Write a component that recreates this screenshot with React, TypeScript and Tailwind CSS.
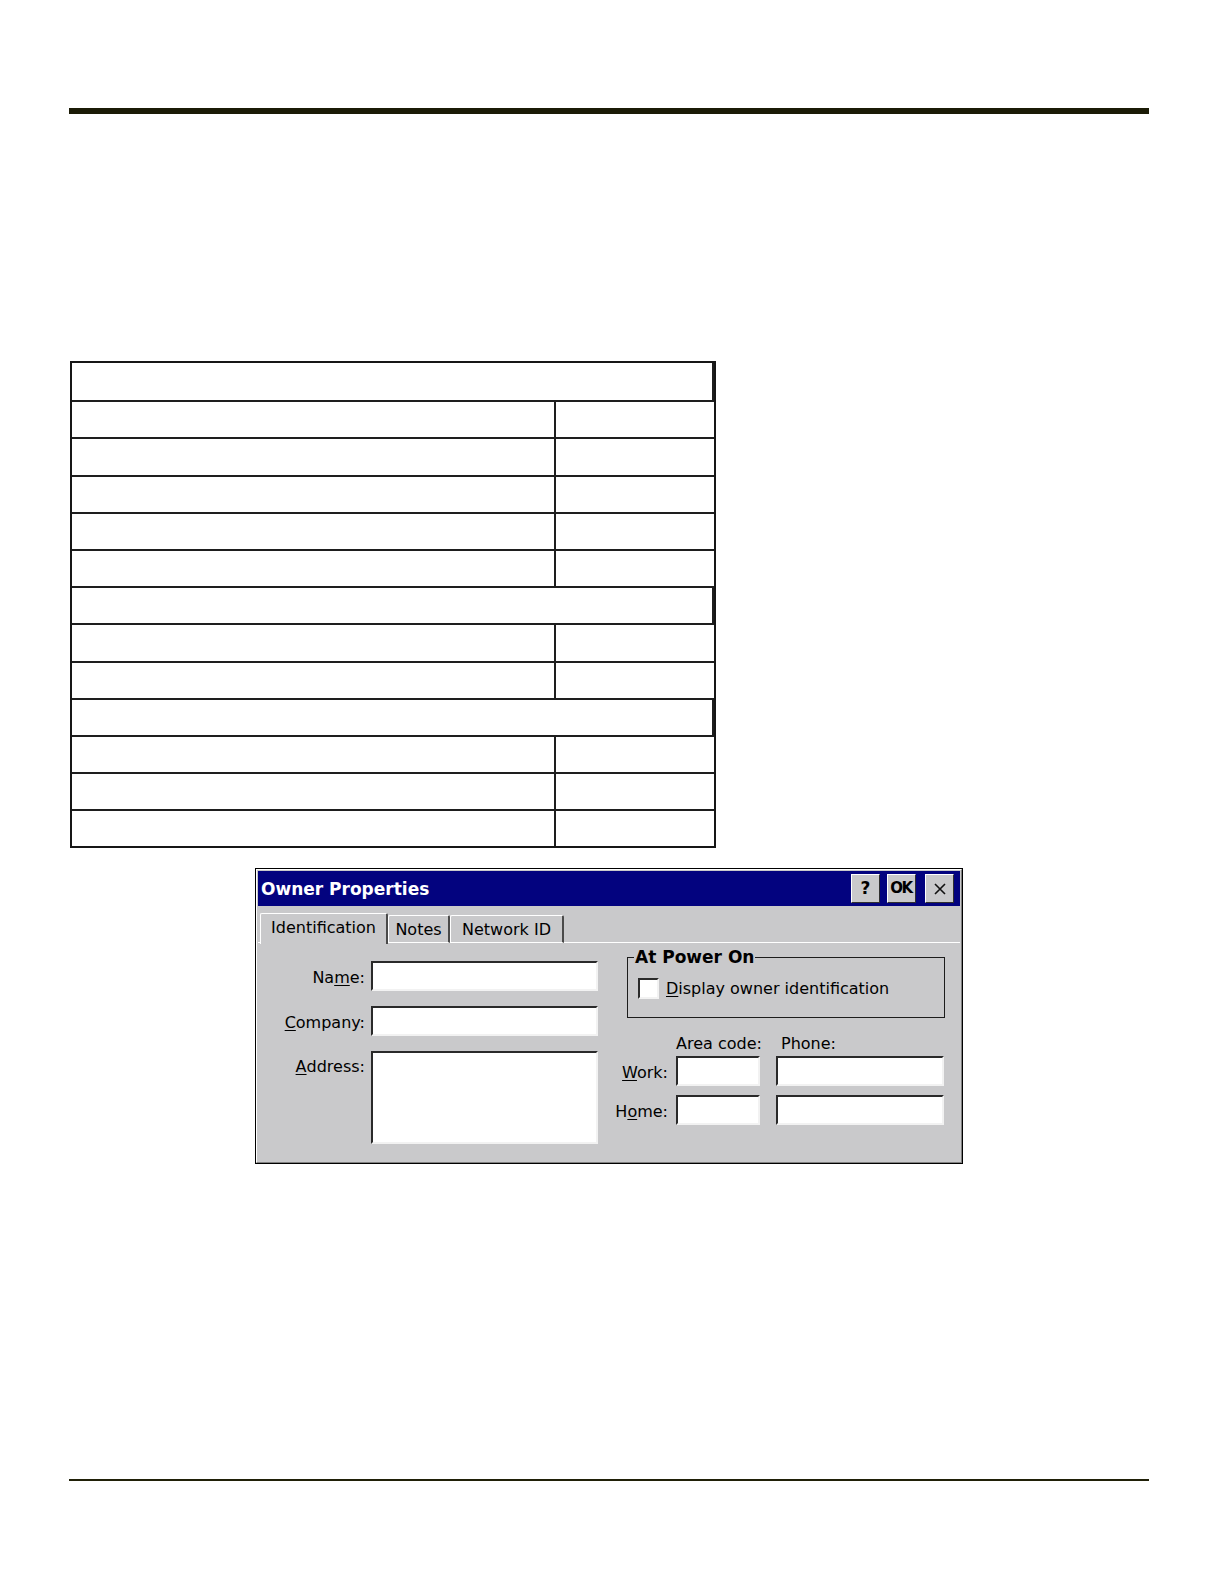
export default function App() {
  const rows: ("full" | "split")[] = [
    "full", "split", "split", "split", "split", "split",
    "full", "split", "split", "full", "split", "split", "split",
  ];
  const sunken =
    "border-2 border-t-[#2a2a2a] border-l-[#2a2a2a] border-b-[#f2f2f2] border-r-[#f2f2f2] bg-white";
  return (
    <div className="w-[1224px] h-[1584px] bg-white flex flex-col overflow-hidden font-['DejaVu_Sans',sans-serif] text-black">
      <div className="mt-[108px] ml-[69px] w-[1080px] h-[6px] bg-[#1b1b06]" />

      <div className="mt-[247px] ml-[70px] w-[646px] border-2 border-[#161616] flex flex-col">
        {rows.map((r, i) => (
          <div
            key={i}
            className={
              i > 0
                ? "h-[37.2px] flex border-t-2 border-[#1e1e1e]"
                : "h-[37.2px] flex"
            }
          >
            {r === "split" ? (
              <>
                <div className="w-[482px]" />
                <div className="flex-1 border-l-2 border-[#1e1e1e]" />
              </>
            ) : (
              <div className="flex-1 border-r-2 border-[#1e1e1e]" />
            )}
          </div>
        ))}
      </div>

      <div className="mt-[20px] ml-[255px] w-[708px] h-[296px] border border-black">
        <div className="w-full h-full border border-t-white border-l-white border-r-[#808080] border-b-[#808080] bg-[#c9c9cb] p-[1px] flex flex-col">
          <div className="h-[35px] bg-[#03037f] flex items-center pl-[3px] pr-[6px]">
            <span className="text-white font-bold text-[17px] leading-[20px]">
              Owner Properties
            </span>
            <div className="ml-auto flex items-center">
              <div className="w-[29px] h-[29px] bg-[#c9c9cb] border border-t-white border-l-white border-r-[#303030] border-b-[#303030] flex items-center justify-center font-bold text-[17px] leading-none">
                ?
              </div>
              <div className="ml-[7px] w-[29px] h-[29px] bg-[#c9c9cb] border border-t-white border-l-white border-r-[#303030] border-b-[#303030] flex items-center justify-center font-bold text-[15px] leading-none tracking-[-1.5px] pr-[1px]">
                OK
              </div>
              <div className="ml-[9px] w-[29px] h-[29px] bg-[#c9c9cb] border border-t-white border-l-white border-r-[#303030] border-b-[#303030] flex items-center justify-center">
                <svg width="14" height="14" viewBox="0 0 14 14">
                  <path d="M2 2 L12 12 M12 2 L2 12" stroke="#111" strokeWidth="1.6" />
                </svg>
              </div>
            </div>
          </div>

          <div className="h-[37px] flex items-end">
            <div className="w-[2px] h-full border-b border-white" />
            <div className="w-[128px] h-[31px] -mb-[1px] bg-[#c9c9cb] border-t border-l border-white border-r-2 border-r-[#4a4a4a] rounded-t-[2px] flex items-start justify-center pt-[4px] text-[16px] leading-[20px] relative z-10">
              Identification
            </div>
            <div className="w-[62px] h-[28px] border-t border-l border-b border-white border-r-2 border-r-[#4a4a4a] rounded-t-[2px] flex items-center justify-center text-[16px] leading-[20px] pt-[2px]">
              Notes
            </div>
            <div className="w-[114px] h-[28px] border-t border-l border-b border-white border-r-2 border-r-[#4a4a4a] rounded-t-[2px] flex items-center justify-center text-[16px] leading-[20px] pt-[2px]">
              Network ID
            </div>
            <div className="flex-1 h-full border-b border-white" />
          </div>

          <div className="flex items-start pt-[4px] text-[16px] leading-[20px]">
            <div className="mt-[14px] grid grid-cols-[107px_227px] gap-x-[6px] gap-y-[15px]">
              <div className="flex justify-end items-center pt-[3px]">
                Na<span className="underline underline-offset-2">m</span>e:
              </div>
              <div className={"h-[30px] " + sunken} />
              <div className="flex justify-end items-center pt-[3px]">
                <span className="underline underline-offset-2">C</span>ompany:
              </div>
              <div className={"h-[30px] " + sunken} />
              <div className="flex justify-end items-start pt-[6px]">
                <span className="underline underline-offset-2">A</span>ddress:
              </div>
              <div className={"h-[93px] " + sunken} />
            </div>

            <div className="ml-[29px] w-[318px] flex flex-col">
              <fieldset className="border border-[#1c1c1c] pt-[10px] pb-[18px]">
                <legend className="ml-[6px] px-[1px] font-bold text-[17px] leading-[20px]">
                  At Power On
                </legend>
                <div className="flex items-center">
                  <div className={"ml-[10px] w-[21px] h-[21px] " + sunken} />
                  <span className="ml-[7px] pt-[2px]">
                    <span className="underline underline-offset-2">D</span>isplay owner identification
                  </span>
                </div>
              </fieldset>

              <div className="mt-[16px] flex h-[20px] pl-[49px]">
                <span className="w-[105px] whitespace-nowrap">Area code:</span>
                <span>Phone:</span>
              </div>
              <div className="mt-[2px] flex items-center">
                <div className="w-[41px] flex justify-end whitespace-nowrap pt-[3px]">
                  <span>
                    <span className="underline underline-offset-2">W</span>ork:
                  </span>
                </div>
                <div className={"ml-[8px] w-[84px] h-[30px] " + sunken} />
                <div className={"ml-[16px] w-[168px] h-[30px] " + sunken} />
              </div>
              <div className="mt-[9px] flex items-center">
                <div className="w-[41px] flex justify-end whitespace-nowrap pt-[3px]">
                  <span>
                    H<span className="underline underline-offset-2">o</span>me:
                  </span>
                </div>
                <div className={"ml-[8px] w-[84px] h-[30px] " + sunken} />
                <div className={"ml-[16px] w-[168px] h-[30px] " + sunken} />
              </div>
            </div>
          </div>
        </div>
      </div>

      <div className="mt-[315px] ml-[69px] w-[1080px] h-[2px] bg-[#202008]" />
    </div>
  );
}
